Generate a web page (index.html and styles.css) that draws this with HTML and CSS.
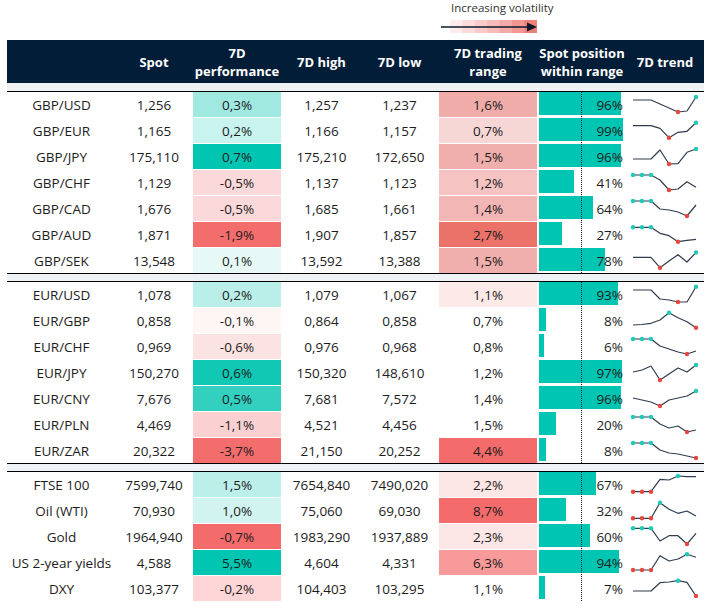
FILE: index.html
```html
<!DOCTYPE html>
<html>
<head>
<meta charset="utf-8">
<link rel="stylesheet" href="styles.css">
</head>
<body>
<div class="page">
  <div class="legend">
    <div class="legend-title">Increasing volatility</div>
    <svg class="legend-svg" width="100" height="14" viewBox="0 0 100 14">
      <rect x="9" y="0" width="13" height="13" fill="#fdeceb"/>
      <rect x="21.4" y="0" width="13" height="13" fill="#fbdcdb"/>
      <rect x="33.8" y="0" width="13" height="13" fill="#f9cccb"/>
      <rect x="46.2" y="0" width="13" height="13" fill="#f6bbb8"/>
      <rect x="58.6" y="0" width="13" height="13" fill="#f4aaa6"/>
      <rect x="71" y="0" width="13" height="13" fill="#f29791"/>
      <rect x="83.4" y="0" width="12.6" height="13" fill="#ef8078"/>
      <line x1="0" y1="7" x2="88" y2="7" stroke="#0b1a2c" stroke-width="1.3"/>
      <polygon points="86,2.5 96,7 86,11.5" fill="#0b1a2c"/>
    </svg>
  </div>
  <div class="table">
    <div class="cols head">
      <div></div>
      <div>Spot</div>
      <div>7D<br>performance</div>
      <div>7D high</div>
      <div>7D low</div>
      <div>7D trading<br>range</div>
      <div>Spot position<br>within range</div>
      <div>7D trend</div>
    </div>
    <div class="strip"></div>

    <div class="section">
      <div class="mid"></div>
      <div class="cols row">
        <div class="c">GBP/USD</div><div class="c">1,256</div>
        <div class="c heat" style="background:#a0e9e1">0,3%</div>
        <div class="c">1,257</div><div class="c">1,237</div>
        <div class="c heat" style="background:#f0aca9">1,6%</div>
        <div class="pos"><div class="bar" style="width:81.6px"></div><div class="pct">96%</div></div>
        <div class="c"><svg class="spark" width="78" height="25" viewBox="0 0 78 25"><polyline points="7,8 16,8 25,8 34,12 43,16 52,20 61,19 70,5"/><circle class="lo" cx="52" cy="20" r="2.2"/><circle class="hi" cx="70" cy="5" r="2.2"/></svg></div>
      </div>
      <div class="cols row">
        <div class="c">GBP/EUR</div><div class="c">1,165</div>
        <div class="c heat" style="background:#c8f3ee">0,2%</div>
        <div class="c">1,166</div><div class="c">1,157</div>
        <div class="c heat" style="background:#f7d6d6">0,7%</div>
        <div class="pos"><div class="bar" style="width:84.2px"></div><div class="pct">99%</div></div>
        <div class="c"><svg class="spark" width="78" height="25" viewBox="0 0 78 25"><polyline points="7,7.7 16,7.7 25,7.7 34,10.3 43,19.7 52,14.3 61,13.3 70,4.7"/><circle class="lo" cx="43" cy="19.7" r="2.2"/><circle class="hi" cx="70" cy="4.7" r="2.2"/></svg></div>
      </div>
      <div class="cols row">
        <div class="c">GBP/JPY</div><div class="c">175,110</div>
        <div class="c heat" style="background:#00c5b1">0,7%</div>
        <div class="c">175,210</div><div class="c">172,650</div>
        <div class="c heat" style="background:#f0afac">1,5%</div>
        <div class="pos"><div class="bar" style="width:81.6px"></div><div class="pct">96%</div></div>
        <div class="c"><svg class="spark" width="78" height="25" viewBox="0 0 78 25"><polyline points="7,15 16,15 25,15 34,6 43,20 52,19.7 61,8.3 70,5"/><circle class="lo" cx="43" cy="20" r="2.2"/><circle class="hi" cx="70" cy="5" r="2.2"/></svg></div>
      </div>
      <div class="cols row">
        <div class="c">GBP/CHF</div><div class="c">1,129</div>
        <div class="c heat" style="background:#fbd8d9">-0,5%</div>
        <div class="c">1,137</div><div class="c">1,123</div>
        <div class="c heat" style="background:#f4c3c2">1,2%</div>
        <div class="pos"><div class="bar" style="width:34.9px"></div><div class="pct">41%</div></div>
        <div class="c"><svg class="spark" width="78" height="25" viewBox="0 0 78 25"><polyline points="7,5 16,5 25,5 34,10 43,20 52,19 61,11.7 70,17.3"/><circle class="hi" cx="7" cy="5" r="2.2"/><circle class="hi" cx="16" cy="5" r="2.2"/><circle class="hi" cx="25" cy="5" r="2.2"/><circle class="lo" cx="43" cy="20" r="2.2"/></svg></div>
      </div>
      <div class="cols row">
        <div class="c">GBP/CAD</div><div class="c">1,676</div>
        <div class="c heat" style="background:#fbd8d9">-0,5%</div>
        <div class="c">1,685</div><div class="c">1,661</div>
        <div class="c heat" style="background:#f2b6b4">1,4%</div>
        <div class="pos"><div class="bar" style="width:54.4px"></div><div class="pct">64%</div></div>
        <div class="c"><svg class="spark" width="78" height="25" viewBox="0 0 78 25"><polyline points="7,5 16,5 25,5 34,13 43,14 52,16 61,20 70,9"/><circle class="hi" cx="7" cy="5" r="2.2"/><circle class="hi" cx="16" cy="5" r="2.2"/><circle class="hi" cx="25" cy="5" r="2.2"/><circle class="lo" cx="61" cy="20" r="2.2"/></svg></div>
      </div>
      <div class="cols row">
        <div class="c">GBP/AUD</div><div class="c">1,871</div>
        <div class="c heat" style="background:#f46d6d">-1,9%</div>
        <div class="c">1,907</div><div class="c">1,857</div>
        <div class="c heat" style="background:#ea7268">2,7%</div>
        <div class="pos"><div class="bar" style="width:23px"></div><div class="pct">27%</div></div>
        <div class="c"><svg class="spark" width="78" height="25" viewBox="0 0 78 25"><polyline points="7,5.3 16,5.3 25,5.3 34,11.3 43,13.7 52,19.7 61,18.3 70,17.3"/><circle class="hi" cx="7" cy="5.3" r="2.2"/><circle class="hi" cx="16" cy="5.3" r="2.2"/><circle class="hi" cx="25" cy="5.3" r="2.2"/><circle class="lo" cx="52" cy="19.7" r="2.2"/></svg></div>
      </div>
      <div class="cols row">
        <div class="c">GBP/SEK</div><div class="c">13,548</div>
        <div class="c heat" style="background:#e6f9f6">0,1%</div>
        <div class="c">13,592</div><div class="c">13,388</div>
        <div class="c heat" style="background:#f0afac">1,5%</div>
        <div class="pos"><div class="bar" style="width:66.3px"></div><div class="pct">78%</div></div>
        <div class="c"><svg class="spark" width="78" height="25" viewBox="0 0 78 25"><polyline points="7,9.3 16,9.3 25,9.3 34,19.7 43,13 52,6.7 61,14 70,4.5"/><circle class="lo" cx="34" cy="19.7" r="2.2"/><circle class="hi" cx="70" cy="4.5" r="2.2"/></svg></div>
      </div>
    </div>

    <div class="sep"></div>

    <div class="section">
      <div class="mid"></div>
      <div class="cols row">
        <div class="c">EUR/USD</div><div class="c">1,078</div>
        <div class="c heat" style="background:#b9efe8">0,2%</div>
        <div class="c">1,079</div><div class="c">1,067</div>
        <div class="c heat" style="background:#fde9e7">1,1%</div>
        <div class="pos"><div class="bar" style="width:79px"></div><div class="pct">93%</div></div>
        <div class="c"><svg class="spark" width="78" height="25" viewBox="0 0 78 25"><polyline points="7,8 16,8 25,8 34,17 43,18 52,20 61,20 70,4.7"/><circle class="lo" cx="52" cy="20" r="2.2"/><circle class="hi" cx="70" cy="4.7" r="2.2"/></svg></div>
      </div>
      <div class="cols row">
        <div class="c">EUR/GBP</div><div class="c">0,858</div>
        <div class="c heat" style="background:#fef6f5">-0,1%</div>
        <div class="c">0,864</div><div class="c">0,858</div>
        <div class="c heat" style="background:#ffffff">0,7%</div>
        <div class="pos"><div class="bar" style="width:6.8px"></div><div class="pct">8%</div></div>
        <div class="c"><svg class="spark" width="78" height="25" viewBox="0 0 78 25"><polyline points="7,17 16,16.5 25,15.3 34,12 43,4.7 52,9.7 61,13.7 70,19.7"/><circle class="hi" cx="43" cy="4.7" r="2.2"/><circle class="lo" cx="70" cy="19.7" r="2.2"/></svg></div>
      </div>
      <div class="cols row">
        <div class="c">EUR/CHF</div><div class="c">0,969</div>
        <div class="c heat" style="background:#fce3e3">-0,6%</div>
        <div class="c">0,976</div><div class="c">0,968</div>
        <div class="c heat" style="background:#ffffff">0,8%</div>
        <div class="pos"><div class="bar" style="width:5.1px"></div><div class="pct">6%</div></div>
        <div class="c"><svg class="spark" width="78" height="25" viewBox="0 0 78 25"><polyline points="7,5 16,5 25,5 34,12 43,15 52,18 61,20 70,17"/><circle class="hi" cx="7" cy="5" r="2.2"/><circle class="hi" cx="16" cy="5" r="2.2"/><circle class="hi" cx="25" cy="5" r="2.2"/><circle class="lo" cx="61" cy="20" r="2.2"/></svg></div>
      </div>
      <div class="cols row">
        <div class="c">EUR/JPY</div><div class="c">150,270</div>
        <div class="c heat" style="background:#10c8b4">0,6%</div>
        <div class="c">150,320</div><div class="c">148,610</div>
        <div class="c heat" style="background:#ffffff">1,2%</div>
        <div class="pos"><div class="bar" style="width:82.5px"></div><div class="pct">97%</div></div>
        <div class="c"><svg class="spark" width="78" height="25" viewBox="0 0 78 25"><polyline points="7,12 16,10 25,6 34,20 43,14 52,8 61,12 70,5"/><circle class="lo" cx="34" cy="20" r="2.2"/><circle class="hi" cx="70" cy="5" r="2.2"/></svg></div>
      </div>
      <div class="cols row">
        <div class="c">EUR/CNY</div><div class="c">7,676</div>
        <div class="c heat" style="background:#33d0c0">0,5%</div>
        <div class="c">7,681</div><div class="c">7,572</div>
        <div class="c heat" style="background:#ffffff">1,4%</div>
        <div class="pos"><div class="bar" style="width:81.6px"></div><div class="pct">96%</div></div>
        <div class="c"><svg class="spark" width="78" height="25" viewBox="0 0 78 25"><polyline points="7,12 16,14 25,16 34,20 43,14 52,12 61,10 70,5"/><circle class="lo" cx="34" cy="20" r="2.2"/><circle class="hi" cx="70" cy="5" r="2.2"/></svg></div>
      </div>
      <div class="cols row">
        <div class="c">EUR/PLN</div><div class="c">4,469</div>
        <div class="c heat" style="background:#fbd0d1">-1,1%</div>
        <div class="c">4,521</div><div class="c">4,456</div>
        <div class="c heat" style="background:#ffffff">1,5%</div>
        <div class="pos"><div class="bar" style="width:17px"></div><div class="pct">20%</div></div>
        <div class="c"><svg class="spark" width="78" height="25" viewBox="0 0 78 25"><polyline points="7,5 16,5 25,5 34,12 43,16 52,14 61,20 70,18"/><circle class="hi" cx="7" cy="5" r="2.2"/><circle class="hi" cx="16" cy="5" r="2.2"/><circle class="hi" cx="25" cy="5" r="2.2"/><circle class="lo" cx="61" cy="20" r="2.2"/></svg></div>
      </div>
      <div class="cols row">
        <div class="c">EUR/ZAR</div><div class="c">20,322</div>
        <div class="c heat" style="background:#f46d6d">-3,7%</div>
        <div class="c">21,150</div><div class="c">20,252</div>
        <div class="c heat" style="background:#f46b6b">4,4%</div>
        <div class="pos"><div class="bar" style="width:6.8px"></div><div class="pct">8%</div></div>
        <div class="c"><svg class="spark" width="78" height="25" viewBox="0 0 78 25"><polyline points="7,5 16,5 25,5 34,12 43,15 52,16 61,18 70,20"/><circle class="hi" cx="7" cy="5" r="2.2"/><circle class="hi" cx="16" cy="5" r="2.2"/><circle class="hi" cx="25" cy="5" r="2.2"/><circle class="lo" cx="70" cy="20" r="2.2"/></svg></div>
      </div>
    </div>

    <div class="sep"></div>

    <div class="section">
      <div class="mid"></div>
      <div class="cols row">
        <div class="c">FTSE 100</div><div class="c">7599,740</div>
        <div class="c heat" style="background:#bcefe9">1,5%</div>
        <div class="c">7654,840</div><div class="c">7490,020</div>
        <div class="c heat" style="background:#fde6e6">2,2%</div>
        <div class="pos"><div class="bar" style="width:57px"></div><div class="pct">67%</div></div>
        <div class="c"><svg class="spark" width="78" height="25" viewBox="0 0 78 25"><polyline points="7,19.7 16,19.7 25,19.7 34,7.3 43,8 52,4 61,4.7 70,4.7"/><circle class="lo" cx="7" cy="19.7" r="2.2"/><circle class="lo" cx="16" cy="19.7" r="2.2"/><circle class="lo" cx="25" cy="19.7" r="2.2"/><circle class="hi" cx="52" cy="4" r="2.2"/></svg></div>
      </div>
      <div class="cols row">
        <div class="c">Oil (WTI)</div><div class="c">70,930</div>
        <div class="c heat" style="background:#d2f4f0">1,0%</div>
        <div class="c">75,060</div><div class="c">69,030</div>
        <div class="c heat" style="background:#f46b6b">8,7%</div>
        <div class="pos"><div class="bar" style="width:27.2px"></div><div class="pct">32%</div></div>
        <div class="c"><svg class="spark" width="78" height="25" viewBox="0 0 78 25"><polyline points="7,20.3 16,20.3 25,20.3 34,4.7 43,11.3 52,15.3 61,13 70,18"/><circle class="lo" cx="7" cy="20.3" r="2.2"/><circle class="lo" cx="16" cy="20.3" r="2.2"/><circle class="lo" cx="25" cy="20.3" r="2.2"/><circle class="hi" cx="34" cy="4.7" r="2.2"/></svg></div>
      </div>
      <div class="cols row">
        <div class="c">Gold</div><div class="c">1964,940</div>
        <div class="c heat" style="background:#f46b6b">-0,7%</div>
        <div class="c">1983,290</div><div class="c">1937,889</div>
        <div class="c heat" style="background:#fde6e6">2,3%</div>
        <div class="pos"><div class="bar" style="width:51px"></div><div class="pct">60%</div></div>
        <div class="c"><svg class="spark" width="78" height="25" viewBox="0 0 78 25"><polyline points="7,4.3 16,4.3 25,4.3 34,17 43,11.7 52,11.7 61,20 70,9.3"/><circle class="hi" cx="7" cy="4.3" r="2.2"/><circle class="hi" cx="16" cy="4.3" r="2.2"/><circle class="hi" cx="25" cy="4.3" r="2.2"/><circle class="lo" cx="61" cy="20" r="2.2"/></svg></div>
      </div>
      <div class="cols row">
        <div class="c">US 2-year yields</div><div class="c">4,588</div>
        <div class="c heat" style="background:#00c5b1">5,5%</div>
        <div class="c">4,604</div><div class="c">4,331</div>
        <div class="c heat" style="background:#f89a9a">6,3%</div>
        <div class="pos"><div class="bar" style="width:79.9px"></div><div class="pct">94%</div></div>
        <div class="c"><svg class="spark" width="78" height="25" viewBox="0 0 78 25"><polyline points="7,20 16,20 25,20 34,5.7 43,11 52,9 61,4.3 70,7.3"/><circle class="lo" cx="7" cy="20" r="2.2"/><circle class="lo" cx="16" cy="20" r="2.2"/><circle class="lo" cx="25" cy="20" r="2.2"/><circle class="hi" cx="61" cy="4.3" r="2.2"/></svg></div>
      </div>
      <div class="cols row">
        <div class="c">DXY</div><div class="c">103,377</div>
        <div class="c heat" style="background:#fdd5d6">-0,2%</div>
        <div class="c">104,403</div><div class="c">103,295</div>
        <div class="c heat" style="background:#ffffff">1,1%</div>
        <div class="pos"><div class="bar" style="width:6px"></div><div class="pct">7%</div></div>
        <div class="c"><svg class="spark" width="78" height="25" viewBox="0 0 78 25"><polyline points="7,15 16,15 25,15 34,6.7 43,6 52,4.7 61,6.3 70,20"/><circle class="hi" cx="52" cy="4.7" r="2.2"/><circle class="lo" cx="70" cy="20" r="2.2"/></svg></div>
      </div>
    </div>
  </div>
</div>
</body>
</html>
```
FILE: styles.css
```css
* { box-sizing: border-box; }
body {
  margin: 0;
  background: #fff;
  color: #1c1c1c;
  font-family: "Open Sans", "Noto Sans", sans-serif;
}
.page { padding: 0 3px 0 7px; width: 707px; }

.legend { height: 40px; margin-left: 434px; width: 124px; }
.legend-title {
  font-size: 11.5px;
  line-height: 14px;
  color: #333;
  padding-left: 10px;
  padding-top: 1px;
  white-space: nowrap;
}
.legend-svg { display: block; margin-top: 5px; }

.table { width: 697px; }
.cols {
  display: grid;
  grid-template-columns: 109px 76px 90px 79px 77px 100px 88px 78px;
}
.head {
  height: 43px;
  background: #021d37;
  color: #fff;
  font-weight: 700;
  font-size: 13px;
  line-height: 18px;
}
.head > div {
  display: flex;
  align-items: center;
  justify-content: center;
  text-align: center;
}
.strip {
  height: 9px;
  background: #eef2f4;
  border-bottom: 1px solid #000;
}
.sep {
  height: 9px;
  background: #eef2f4;
  border-top: 1px solid #000;
  border-bottom: 1px solid #000;
}
.section {
  display: grid;
  row-gap: 1px;
  position: relative;
}
.row { height: 25px; }
.c {
  display: flex;
  align-items: center;
  justify-content: center;
  font-size: 13.5px;
  white-space: nowrap;
}
.heat { margin: 0 1px; }
.pos { display: grid; padding-left: 1px; }
.bar {
  grid-area: 1 / 1;
  height: 23px;
  background: #00c5b2;
  align-self: start;
}
.pct {
  grid-area: 1 / 1;
  justify-self: end;
  align-self: center;
  padding-right: 3px;
  font-size: 13.5px;
}
.mid {
  position: absolute;
  top: 0;
  bottom: 0;
  left: 574px;
  border-left: 1px dotted #0c1c2e;
  z-index: 2;
}
.spark { display: block; }
.spark polyline {
  fill: none;
  stroke: #2e3d4f;
  stroke-width: 1.2;
  stroke-linejoin: round;
}
.spark .hi { fill: #1fc9b7; }
.spark .lo { fill: #e8453c; }
```
